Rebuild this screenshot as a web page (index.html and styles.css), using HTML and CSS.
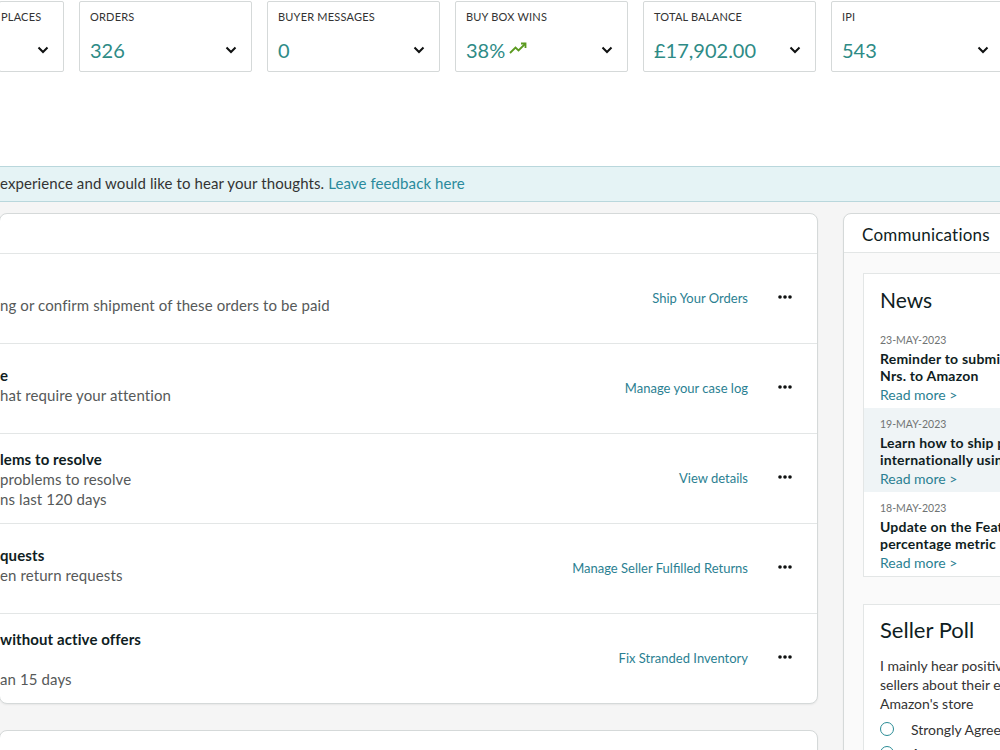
FILE: index.html
```html
<!DOCTYPE html>
<html lang="en">
<head>
    <meta charset="UTF-8">
    <meta name="viewport" content="width=device-width, initial-scale=1.0">
    <title>Seller Central - Home</title>
    <link rel="stylesheet" href="styles.css">
</head>
<body>
    <div class="top">
        <!-- metric cards -->
        <div class="metrics">
            <div class="metric metric--cut">
                <div class="metric-label">PLACES</div>
                <div class="metric-body">
                    <span class="metric-value"></span>
                    <svg class="chevron" width="12" height="8" viewBox="0 0 12 8"><polyline points="1.5,1.5 6,6 10.5,1.5"/></svg>
                </div>
            </div>
            <div class="metric">
                <div class="metric-label">ORDERS</div>
                <div class="metric-body">
                    <span class="metric-value">326</span>
                    <svg class="chevron" width="12" height="8" viewBox="0 0 12 8"><polyline points="1.5,1.5 6,6 10.5,1.5"/></svg>
                </div>
            </div>
            <div class="metric">
                <div class="metric-label">BUYER MESSAGES</div>
                <div class="metric-body">
                    <span class="metric-value">0</span>
                    <svg class="chevron" width="12" height="8" viewBox="0 0 12 8"><polyline points="1.5,1.5 6,6 10.5,1.5"/></svg>
                </div>
            </div>
            <div class="metric">
                <div class="metric-label">BUY BOX WINS</div>
                <div class="metric-body">
                    <span class="metric-value">38%
                        <svg class="trend" width="19" height="12" viewBox="0 0 19 12"><path d="M1 11 L6.5 5.5 L9.5 8.5 L16.5 1.5"/><path d="M12 1.5 H16.5 V6"/></svg>
                    </span>
                    <svg class="chevron" width="12" height="8" viewBox="0 0 12 8"><polyline points="1.5,1.5 6,6 10.5,1.5"/></svg>
                </div>
            </div>
            <div class="metric">
                <div class="metric-label">TOTAL BALANCE</div>
                <div class="metric-body">
                    <span class="metric-value">£17,902.00</span>
                    <svg class="chevron" width="12" height="8" viewBox="0 0 12 8"><polyline points="1.5,1.5 6,6 10.5,1.5"/></svg>
                </div>
            </div>
            <div class="metric">
                <div class="metric-label">IPI</div>
                <div class="metric-body">
                    <span class="metric-value">543</span>
                    <svg class="chevron" width="12" height="8" viewBox="0 0 12 8"><polyline points="1.5,1.5 6,6 10.5,1.5"/></svg>
                </div>
            </div>
        </div>

        <div class="banner">
            experience and would like to hear your thoughts. <a href="#">Leave feedback here</a>
        </div>
    </div>

    <div class="dashboard">
        <div class="main-col">
            <section class="card actions">
                <div class="actions-head"></div>

                <div class="action-row">
                    <div class="action-text">
                        <div class="action-title">&nbsp;</div>
                        <div class="action-sub">ng or confirm shipment of these orders to be paid</div>
                    </div>
                    <a class="action-link" href="#">Ship Your Orders</a>
                    <svg class="dots" width="16" height="6" viewBox="0 0 16 6"><circle cx="3" cy="3" r="1.8"/><circle cx="8" cy="3" r="1.8"/><circle cx="13" cy="3" r="1.8"/></svg>
                </div>

                <div class="action-row">
                    <div class="action-text">
                        <div class="action-title">e</div>
                        <div class="action-sub">hat require your attention</div>
                    </div>
                    <a class="action-link" href="#">Manage your case log</a>
                    <svg class="dots" width="16" height="6" viewBox="0 0 16 6"><circle cx="3" cy="3" r="1.8"/><circle cx="8" cy="3" r="1.8"/><circle cx="13" cy="3" r="1.8"/></svg>
                </div>

                <div class="action-row">
                    <div class="action-text action-text--tall">
                        <div class="action-title">lems to resolve</div>
                        <div class="action-sub">problems to resolve</div>
                        <div class="action-sub">ns last 120 days</div>
                    </div>
                    <a class="action-link" href="#">View details</a>
                    <svg class="dots" width="16" height="6" viewBox="0 0 16 6"><circle cx="3" cy="3" r="1.8"/><circle cx="8" cy="3" r="1.8"/><circle cx="13" cy="3" r="1.8"/></svg>
                </div>

                <div class="action-row">
                    <div class="action-text">
                        <div class="action-title">quests</div>
                        <div class="action-sub">en return requests</div>
                    </div>
                    <a class="action-link" href="#">Manage Seller Fulfilled Returns</a>
                    <svg class="dots" width="16" height="6" viewBox="0 0 16 6"><circle cx="3" cy="3" r="1.8"/><circle cx="8" cy="3" r="1.8"/><circle cx="13" cy="3" r="1.8"/></svg>
                </div>

                <div class="action-row">
                    <div class="action-text action-text--tall">
                        <div class="action-title">without active offers</div>
                        <div class="action-sub">&nbsp;</div>
                        <div class="action-sub">an 15 days</div>
                    </div>
                    <a class="action-link" href="#">Fix Stranded Inventory</a>
                    <svg class="dots" width="16" height="6" viewBox="0 0 16 6"><circle cx="3" cy="3" r="1.8"/><circle cx="8" cy="3" r="1.8"/><circle cx="13" cy="3" r="1.8"/></svg>
                </div>
            </section>

            <section class="card next-card"></section>
        </div>

        <aside class="card comms">
            <div class="comms-head">Communications</div>
            <div class="comms-body">
                <div class="panel news">
                    <h2>News</h2>
                    <div class="news-item">
                        <div class="news-date">23-MAY-2023</div>
                        <div class="news-title">Reminder to submit your VAT Registration<br>Nrs. to Amazon</div>
                        <a class="read-more" href="#">Read more &gt;</a>
                    </div>
                    <div class="news-item news-item--alt">
                        <div class="news-date">19-MAY-2023</div>
                        <div class="news-title">Learn how to ship products<br>internationally using Amazon</div>
                        <a class="read-more" href="#">Read more &gt;</a>
                    </div>
                    <div class="news-item">
                        <div class="news-date">18-MAY-2023</div>
                        <div class="news-title">Update on the Featured Offer<br>percentage metric</div>
                        <a class="read-more" href="#">Read more &gt;</a>
                    </div>
                </div>

                <div class="panel poll">
                    <h2>Seller Poll</h2>
                    <p>I mainly hear positive things from other<br>sellers about their experience selling in<br>Amazon's store</p>
                    <label class="poll-option"><span class="radio"></span>Strongly Agree</label>
                    <label class="poll-option"><span class="radio"></span>Agree</label>
                </div>
            </div>
        </aside>
    </div>
</body>
</html>
```

FILE: styles.css
```css
html, body {
    overflow: hidden;
}

body {
    margin: 0;
    font-family: Lato, 'Liberation Sans', Arial, sans-serif;
    color: #0f1111;
    background-color: #f5f5f5;
    height: 750px;
}

a {
    color: #2b7f92;
    text-decoration: none;
}

.top {
    background: #fff;
    padding-top: 1px;
}

/* metric cards */
.metrics {
    display: flex;
    gap: 15px;
    margin-left: -1px;
}

.metric {
    flex: 0 0 173px;
    box-sizing: border-box;
    height: 71px;
    padding: 8px 14px 0 10px;
    border: 1px solid #d5d9d9;
    border-radius: 2px;
    background: #fff;
}

.metric--cut {
    flex-basis: 65px;
    padding-left: 1px;
}

.metric-label {
    font-size: 11px;
    line-height: 14px;
    color: #333;
    letter-spacing: 0.2px;
}

.metric-body {
    display: flex;
    align-items: center;
    justify-content: space-between;
    margin-top: 13px;
    height: 26px;
}

.metric-value {
    font-size: 20px;
    line-height: 26px;
    color: #2e8b86;
    display: flex;
    align-items: center;
    gap: 3px;
}

.chevron polyline {
    fill: none;
    stroke: #0f1111;
    stroke-width: 2;
}

.trend {
    margin-top: -4px;
    margin-left: 1px;
}

.trend path {
    fill: none;
    stroke: #5b9a20;
    stroke-width: 1.8;
}

.banner {
    margin-top: 94px;
    height: 34px;
    line-height: 33px;
    font-size: 15px;
    letter-spacing: 0.1px;
    color: #333;
    background: #e5f3f5;
    border-top: 1px solid #b9d7dc;
    border-bottom: 1px solid #b9d7dc;
    white-space: nowrap;
}

.banner a {
    color: #2a8a9c;
}

/* dashboard columns */
.dashboard {
    display: flex;
    align-items: flex-start;
    gap: 25px;
    padding-top: 11px;
}

.card {
    background: #fff;
    border: 1px solid #d5d9d9;
    border-radius: 8px;
    box-shadow: 0 1px 2px rgba(0, 0, 0, 0.06);
}

.main-col {
    flex: 0 0 819px;
    margin-left: -1px;
}

.actions-head {
    height: 39px;
    border-bottom: 1px solid #e3e6e6;
}

.action-row {
    display: flex;
    align-items: center;
    height: 89px;
    border-bottom: 1px solid #e3e6e6;
    padding-right: 24px;
}

.action-row:last-child {
    border-bottom: none;
}

.action-text {
    flex: 1;
    font-size: 15px;
    letter-spacing: 0.1px;
    line-height: 20px;
    margin-top: -8px;
    white-space: nowrap;
}

.action-text--tall {
    margin-top: 0;
}

.action-title {
    font-weight: bold;
    color: #0f1d22;
}

.action-sub {
    color: #565959;
}

.action-link {
    font-size: 13px;
    margin-right: 29px;
    margin-top: -2px;
}

.dots {
    fill: #0f1111;
    margin-top: -3px;
}

.next-card {
    margin-top: 26px;
    height: 100px;
}

/* communications column */
.comms {
    flex: 0 0 360px;
    height: 600px;
    border-radius: 8px 8px 0 0;
}

.comms-head {
    height: 38px;
    line-height: 41px;
    padding-left: 18px;
    font-size: 17px;
    letter-spacing: 0.2px;
    color: #0f1d22;
    border-bottom: 1px solid #e3e6e6;
}

.comms-body {
    background: #fafafa;
    padding: 20px 0 0 19px;
    height: 100%;
}

.panel {
    background: #fff;
    border: 1px solid #e3e6e6;
    white-space: nowrap;
}

.panel h2 {
    margin: 0;
    font-weight: normal;
    line-height: 24px;
    color: #0f1d22;
}

.news h2 {
    font-size: 21px;
    padding: 14px 16px 0;
    margin-bottom: 12px;
}

.news-item {
    padding: 9px 16px 6px;
    height: 69px;
}

.news-item--alt {
    background: #eff4f6;
}

.news-date {
    font-size: 10.5px;
    line-height: 15px;
    color: #6f7373;
    margin-bottom: 2px;
}

.news-title {
    font-size: 14px;
    font-weight: bold;
    letter-spacing: 0.2px;
    line-height: 17px;
    color: #0f1d22;
}

.read-more {
    font-size: 14px;
    line-height: 18px;
}

.poll {
    margin-top: 27px;
    padding: 13px 16px;
}

.poll h2 {
    font-size: 22px;
}

.poll p {
    margin: 14px 0 4px;
    font-size: 14px;
    line-height: 19px;
    color: #333;
}

.poll-option {
    display: flex;
    align-items: center;
    height: 24px;
    font-size: 14px;
    color: #333;
}

.radio {
    width: 12px;
    height: 12px;
    border: 1.5px solid #2a8c96;
    border-radius: 50%;
    margin-right: 17px;
}
```
